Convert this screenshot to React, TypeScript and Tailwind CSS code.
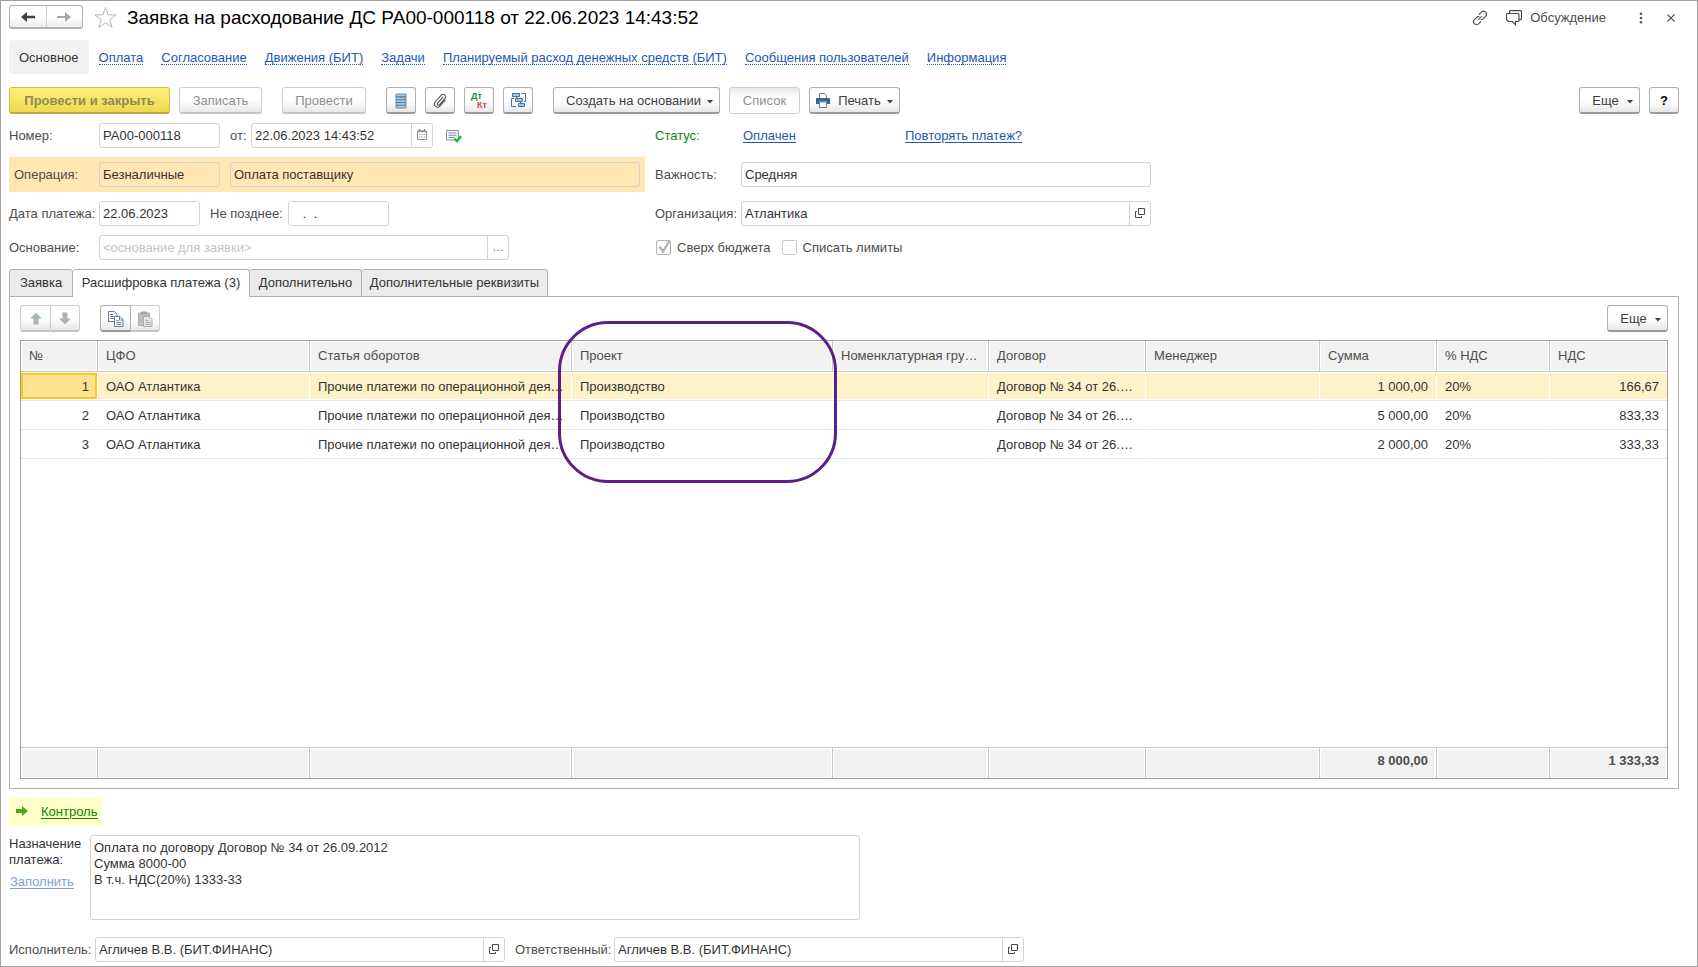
import { useId, useState } from 'react'
import type { ReactNode } from 'react'

type Row = {
  id: number
  cfo: string
  article: string
  project: string
  contract: string
  sum: string
  vatRate: string
  vat: string
}

const rows: Row[] = [
  { id: 1, cfo: 'ОАО Атлантика', article: 'Прочие платежи по операционной дея…', project: 'Производство', contract: 'Договор № 34 от 26.…', sum: '1 000,00', vatRate: '20%', vat: '166,67' },
  { id: 2, cfo: 'ОАО Атлантика', article: 'Прочие платежи по операционной дея…', project: 'Производство', contract: 'Договор № 34 от 26.…', sum: '5 000,00', vatRate: '20%', vat: '833,33' },
  { id: 3, cfo: 'ОАО Атлантика', article: 'Прочие платежи по операционной дея…', project: 'Производство', contract: 'Договор № 34 от 26.…', sum: '2 000,00', vatRate: '20%', vat: '333,33' },
]

const columns = [
  { title: '№', width: 'w-[77px]', total: '' },
  { title: 'ЦФО', width: 'w-[212px]', total: '' },
  { title: 'Статья оборотов', width: 'w-[262px]', total: '' },
  { title: 'Проект', width: 'w-[261px]', total: '' },
  { title: 'Номенклатурная гру…', width: 'w-[156px]', total: '' },
  { title: 'Договор', width: 'w-[157px]', total: '' },
  { title: 'Менеджер', width: 'w-[174px]', total: '' },
  { title: 'Сумма', width: 'w-[117px]', total: '8 000,00' },
  { title: '% НДС', width: 'w-[113px]', total: '' },
  { title: 'НДС', width: 'w-[117px]', total: '1 333,33' },
]

const navLinks = [
  'Оплата',
  'Согласование',
  'Движения (БИТ)',
  'Задачи',
  'Планируемый расход денежных средств (БИТ)',
  'Сообщения пользователей',
  'Информация',
]

const tabs = [
  { title: 'Заявка', width: 'w-[64px]' },
  { title: 'Расшифровка платежа (3)', width: 'w-[177px]' },
  { title: 'Дополнительно', width: 'w-[112px]' },
  { title: 'Дополнительные реквизиты', width: 'w-[186px]' },
]

const buttonBase =
  'flex h-[27px] shrink-0 items-center justify-center whitespace-nowrap rounded-[3px] border border-b-2 bg-linear-to-b from-white from-50% to-[#e8e8e8] pt-px'
const buttonOn = 'border-[#b0b0b0] border-b-[#9a9a9a] text-[#404040]'
const buttonOff = 'border-[#cfcfcf] border-b-[#c4c4c4] text-[#8f8f8f]'

function Caret() {
  return (
    <svg className="mt-[2px] shrink-0" width="6" height="4" viewBox="0 0 6 4" aria-hidden="true">
      <path d="M0 0h6L3 3.5z" fill="#404040" />
    </svg>
  )
}

function MoreButton() {
  return (
    <button type="button" className={`${buttonBase} ${buttonOn} w-[61px] gap-2 pl-[6px]`}>
      Еще
      <Caret />
    </button>
  )
}

function OpenIcon() {
  return (
    <svg width="10" height="10" viewBox="0 0 10 10" fill="none" stroke="#4a4a4a" aria-hidden="true">
      <path d="M3.5 0.5h6v6h-6z" />
      <path d="M2 3.5H0.5v6h6V8" />
    </svg>
  )
}

type FieldProps = {
  label: string
  value: string
  labelClass?: string
  boxClass: string
  placeholder?: string
  button?: ReactNode
  buttonLabel?: string
}

function Field({ label, value, labelClass = '', boxClass, placeholder, button, buttonLabel }: FieldProps) {
  const id = useId()
  return (
    <>
      {labelClass && (
        <label htmlFor={id} className={`shrink-0 whitespace-nowrap text-[#4d4d4d] ${labelClass}`}>
          {label}
        </label>
      )}
      <div className={`flex h-[25px] shrink-0 rounded-[3px] border border-[#d2d2d2] ${boxClass}`}>
        <input
          id={id}
          aria-label={labelClass ? undefined : label}
          defaultValue={value}
          placeholder={placeholder}
          className="min-w-0 flex-1 bg-transparent px-[3px] text-[#333] outline-none placeholder:text-[#c4c4c4]"
        />
        {button && (
          <button type="button" aria-label={buttonLabel} className="flex w-[21px] shrink-0 items-center justify-center border-l border-[#d2d2d2] pb-[2px] text-[#808080]">
            {button}
          </button>
        )}
      </div>
    </>
  )
}

function Check({ label, checked = false }: { label: string; checked?: boolean }) {
  return (
    <label className="relative flex items-center gap-[6px] text-[#4d4d4d]">
      <input
        type="checkbox"
        defaultChecked={checked}
        className="peer size-[15px] appearance-none rounded-[2px] border border-[#c9c9c9] bg-white checked:border-[#b5b5b5]"
      />
      <svg className="pointer-events-none absolute left-[2px] top-0 hidden peer-checked:block" width="13" height="14" viewBox="0 0 13 14" aria-hidden="true">
        <path d="M1.5 6.5 5 11.5 11.5 0.8" fill="none" stroke="#b5b5b5" strokeWidth="2.4" />
      </svg>
      {label}
    </label>
  )
}

export default function App(): React.JSX.Element {
  const [activeTab, setActiveTab] = useState(1)
  const [selectedRow, setSelectedRow] = useState(1)

  const cellClass = (selected: boolean): string =>
    selected
      ? 'h-[29px] truncate border-b border-r border-b-[#e5e5e5] border-r-white bg-[#fff2c8] pl-2 pt-[2px] shadow-[inset_0_1px_#fff,inset_0_-1px_#fff]'
      : 'h-[29px] truncate border-b border-r border-b-[#e5e5e5] border-r-transparent pl-2 pt-[2px]'

  return (
    <main className="min-h-screen border border-[#a0a0a0] bg-white pb-[3px] pl-2 pr-[18px] pt-1 font-['Liberation_Sans',Arial,sans-serif] text-[13px] leading-4 text-[#333]">
      <header className="flex h-6 items-center">
        <div className="flex h-6 w-[74px] rounded-[3px] border border-b-2 border-[#b0b0b0] bg-linear-to-b from-white from-50% to-[#ececec]">
          <button type="button" aria-label="Назад" className="flex flex-1 items-center justify-center border-r border-[#cfcfcf]">
            <svg width="14" height="12" viewBox="0 0 14 12" aria-hidden="true">
              <path d="M0 6 6 1v3.8h8v2.4H6V11z" fill="#404040" />
            </svg>
          </button>
          <button type="button" aria-label="Вперед" className="flex flex-1 items-center justify-center">
            <svg width="14" height="12" viewBox="0 0 14 12" aria-hidden="true">
              <path d="M14 6 8 1v4H0v2h8v4z" fill="#a8a8a8" />
            </svg>
          </button>
        </div>
        <button type="button" aria-label="В избранное" className="ml-[11px]">
          <svg width="23" height="23" viewBox="0 0 23 23" fill="none" stroke="#b4b8bd" aria-hidden="true">
            <path d="M11.5 1.5 14.2 8.7 22 9 15.8 13.7 18.1 21.3 11.5 16.9 4.9 21.3 7.2 13.7 1 9l7.8-.3z" />
          </svg>
        </button>
        <h1 className="ml-[10px] whitespace-nowrap pt-[2px] text-[19px] leading-6 text-black">Заявка на расходование ДС РА00-000118 от 22.06.2023 14:43:52</h1>
        <div className="ml-auto flex items-center pr-1 pt-[2px] text-[#4d4d4d]">
          <button type="button" aria-label="Получить ссылку">
            <svg width="16" height="16" viewBox="0 0 16 16" fill="none" stroke="#555" strokeWidth="1.2" aria-hidden="true">
              <path d="M7 4.5 9.3 2.2a2.9 2.9 0 0 1 4.3 4.2L11.4 8.7a2.9 2.9 0 0 1-2.7.8" />
              <path d="M9 11.5 6.7 13.8a2.9 2.9 0 0 1-4.3-4.2L4.6 7.3a2.9 2.9 0 0 1 2.7-.8" />
              <path d="M6.3 9.7 9.7 6.3" />
            </svg>
          </button>
          <button type="button" className="ml-[18px] flex items-center gap-2">
            <svg width="16" height="16" viewBox="0 0 16 16" fill="none" stroke="#444" strokeWidth="1.1" aria-hidden="true">
              <path d="M1.5 3.5h10.5q1 0 1 1v6q0 1-1 1H9.5v3.2L6.3 11.5H2.500l-2-2v-5q0-1 1-1z" />
              <path d="M3.5 3.5V1.6q0-1 1-1h10q1 0 1 1v7.500L13 10" />
            </svg>
            Обсуждение
          </button>
          <button type="button" aria-label="Меню" className="ml-[33px]">
            <svg width="4" height="12" viewBox="0 0 4 12" fill="#555" aria-hidden="true">
              <circle cx="2" cy="1.7" r="1.3" />
              <circle cx="2" cy="6" r="1.3" />
              <circle cx="2" cy="10.3" r="1.3" />
            </svg>
          </button>
          <button type="button" aria-label="Закрыть" className="ml-6">
            <svg width="8" height="8" viewBox="0 0 8 8" stroke="#555" strokeWidth="1.1" aria-hidden="true">
              <path d="M0.5 0.5l7 7M7.5 0.5l-7 7" />
            </svg>
          </button>
        </div>
      </header>

      <nav className="mt-[11px] flex h-[34px] items-center gap-[18px]">
        <span className="-mr-2 flex h-full items-center rounded-[4px] bg-[#f2f2f2] px-[10px] pt-[2px]">Основное</span>
        {navLinks.map((link) => (
          <a key={link} href="#" className="mt-[2px] whitespace-nowrap border-b border-dotted border-[#2456b8] leading-[13px] text-[#2456b8]">
            {link}
          </a>
        ))}
      </nav>

      <div className="mt-[13px] flex items-center">
        <button
          type="button"
          className="h-[27px] w-[161px] rounded-[3px] border border-b-2 border-[#d0bd48] border-b-[#bda93c] bg-linear-to-b from-[#fff07a] to-[#ecd94f] pt-px font-bold text-[#908a5a]"
        >
          Провести и закрыть
        </button>
        <button type="button" className={`${buttonBase} ${buttonOff} ml-[9px] w-[83px]`}>
          Записать
        </button>
        <button type="button" className={`${buttonBase} ${buttonOff} ml-5 w-[84px]`}>
          Провести
        </button>
        <div className="ml-5 flex gap-[9px]">
          <button type="button" aria-label="Реестр" className={`${buttonBase} ${buttonOn} w-[30px]`}>
            <svg width="12" height="16" viewBox="0 0 12 16" aria-hidden="true">
              <path d="M1 1h10v14H1z" fill="#a9c6dd" stroke="#6f93b0" />
              <path d="M1 3.9h10M1 6.7h10M1 9.5h10M1 12.3h10" stroke="#4f7b9e" strokeWidth="1.1" />
            </svg>
          </button>
          <button type="button" aria-label="Присоединенные файлы" className={`${buttonBase} ${buttonOn} w-[30px]`}>
            <svg width="14" height="15" viewBox="0 0 14 15" fill="none" stroke="#555" strokeWidth="1.1" strokeLinecap="round" aria-hidden="true">
              <path d="M9.8 4.200 4.600 10.200a1.200 1.200 0 0 0 1.800 1.600L12 5.400a2.500 2.500 0 0 0-3.800-3.300L2.100 9a3.200 3.200 0 0 0 4.800 4.200l5.200-6" />
            </svg>
          </button>
          <button type="button" aria-label="Движения документа" className={`${buttonBase} ${buttonOn} w-[30px] text-[9px] font-bold leading-[9px]`}>
            <span className="flex flex-col items-start">
              <span className="text-[#109048]">Дт</span>
              <span className="pl-[6px] text-[#dd4444]">Кт</span>
            </span>
          </button>
          <button type="button" aria-label="Структура подчиненности" className={`${buttonBase} ${buttonOn} w-[30px]`}>
            <svg width="15" height="15" viewBox="0 0 15 15" fill="#a9c6dd" stroke="#3f74a0" aria-hidden="true">
              <path d="M1.500 0.500h7v3h-7zM4.500 5.500h7v3h-7zM7.500 10.500h6v3h-6z" />
              <path d="M10.500 0.500h4v8H13M3 5.500H0.500v8H5M5.500 4v1.500M9.500 9v1.500" fill="none" />
            </svg>
          </button>
        </div>
        <button type="button" className={`${buttonBase} ${buttonOn} ml-5 w-[167px] gap-[6px] pl-[6px]`}>
          Создать на основании
          <Caret />
        </button>
        <button
          type="button"
          className="ml-[9px] h-[27px] w-[71px] rounded-[3px] border border-[#cfcfcf] bg-linear-to-b from-[#e9e9e9] to-white to-40% text-[#8f8f8f]"
        >
          Список
        </button>
        <button type="button" className={`${buttonBase} ${buttonOn} ml-[9px] w-[91px] gap-[6px]`}>
          <svg className="mr-[2px]" width="14" height="15" viewBox="0 0 14 15" aria-hidden="true">
            <path d="M3.500 5V0.500h5l2 2V5" fill="#fff" stroke="#5f7f9d" />
            <path d="M1 5h12q1 0 1 1v5h-3V8.500H3V11H0V6q0-1 1-1z" fill="#3c648c" />
            <path d="M3.500 9h7v5.500h-7z" fill="#fff" stroke="#5f7f9d" />
          </svg>
          Печать
          <Caret />
        </button>
        <div className="ml-auto flex gap-[9px]">
          <MoreButton />
          <button type="button" aria-label="Справка" className={`${buttonBase} ${buttonOn} w-[30px] font-bold text-black`}>
            ?
          </button>
        </div>
      </div>

      <form className="mt-[9px] flex flex-col gap-[9px]" onSubmit={(event) => event.preventDefault()}>
        <div className="flex items-center">
          <div className="flex w-[646px] items-center">
            <Field label="Номер:" value="РА00-000118" labelClass="w-[90px]" boxClass="w-[121px]" />
            <Field
              label="от:"
              value="22.06.2023 14:43:52"
              labelClass="w-[31px] pl-[10px]"
              boxClass="w-[182px]"
              buttonLabel="Выбрать дату"
              button={
                <svg width="10" height="11" viewBox="0 0 10 11" fill="none" stroke="#909090" aria-hidden="true">
                  <path d="M0.500 2h9v8.500h-9z" />
                  <path d="M0.500 2.500h9M2.500 0v2M7.500 0v2" strokeWidth="1.600" />
                  <path d="M2 5.500h6M2 8h6" strokeDasharray="1.200 1.200" />
                </svg>
              }
            />
            <svg className="ml-[13px]" width="16" height="14" viewBox="0 0 16 14" aria-hidden="true">
              <path d="M0.500 1.500h12v9.500h-12z" fill="#f3f6f9" stroke="#8494a6" />
              <path d="M2.500 4h8M2.500 6.300h8M2.500 8.500h6" stroke="#8494a6" />
              <path d="M8.500 9.500l2.500 2.700 4-5" fill="none" stroke="#27b033" strokeWidth="2.400" />
            </svg>
          </div>
          <span className="w-[88px] text-[#0a850a]">Статус:</span>
          <a href="#" className="w-[162px] text-[#2456b8] underline underline-offset-2">
            Оплачен
          </a>
          <a href="#" className="text-[#2456b8] underline underline-offset-2">
            Повторять платеж?
          </a>
        </div>

        <div className="flex items-center">
          <div className="mr-[10px] flex h-[35px] w-[636px] items-center gap-[10px] bg-[#ffe6b3] pl-[5px]">
            <div className="flex items-center">
              <Field label="Операция:" value="Безналичные" labelClass="w-[85px]" boxClass="w-[121px]" />
            </div>
            <Field label="Вид операции" value="Оплата поставщику" boxClass="w-[410px]" />
          </div>
          <Field label="Важность:" value="Средняя" labelClass="w-[86px]" boxClass="w-[410px]" />
        </div>

        <div className="flex items-center">
          <div className="flex w-[646px] items-center">
            <Field label="Дата платежа:" value="22.06.2023" labelClass="w-[90px]" boxClass="w-[101px]" />
            <Field label="Не позднее:" value="   .  ." labelClass="w-[88px] pl-[10px]" boxClass="w-[101px]" />
          </div>
          <Field label="Организация:" value="Атлантика" labelClass="w-[86px]" boxClass="w-[410px]" button={<OpenIcon />} buttonLabel="Открыть организацию" />
        </div>

        <div className="flex items-center">
          <div className="flex w-[646px] items-center">
            <Field
              label="Основание:"
              value=""
              placeholder="<основание для заявки>"
              labelClass="w-[90px]"
              boxClass="w-[410px]"
              button="..."
              buttonLabel="Выбрать основание"
            />
          </div>
          <div className="flex gap-[11px] pl-px">
            <Check label="Сверх бюджета" checked />
            <Check label="Списать лимиты" />
          </div>
        </div>
      </form>

      <div role="tablist" className="mt-[9px] flex h-7">
        {tabs.map((tab, index) => (
          <button
            key={tab.title}
            type="button"
            role="tab"
            aria-selected={index === activeTab}
            onClick={() => setActiveTab(index)}
            className={`relative whitespace-nowrap rounded-t-[3px] border-b border-r border-t border-[#b0b0b0] first:border-l ${tab.width} ${index === activeTab ? 'border-b-white bg-white' : 'bg-[#ebebeb]'}`}
          >
            {tab.title}
          </button>
        ))}
      </div>

      <section className="-mt-px border border-[#b0b0b0] px-[10px] pb-[9px] pt-2">
        <div className="flex h-[27px]">
          <button type="button" aria-label="Переместить вверх" className={`${buttonBase} ${buttonOff} w-[31px] rounded-r-none`}>
            <svg width="12" height="13" viewBox="0 0 12 13" fill="#a9b5bd" aria-hidden="true">
              <path d="M6 0.500 12 6.500H8.500V12.500h-5V6.500H0z" />
            </svg>
          </button>
          <button type="button" aria-label="Переместить вниз" className={`${buttonBase} ${buttonOff} w-[29px] rounded-l-none border-l-0`}>
            <svg width="12" height="13" viewBox="0 0 12 13" fill="#a9b5bd" aria-hidden="true">
              <path d="M6 12.500 12 6.500H8.500V0.500h-5V6.500H0z" />
            </svg>
          </button>
          <button type="button" aria-label="Скопировать строки" className={`${buttonBase} ${buttonOn} ml-5 w-[31px] rounded-r-none`}>
            <svg width="16" height="16" viewBox="0 0 16 16" fill="#fff" stroke="#6a7d92" aria-hidden="true">
              <path d="M0.500 0.500h6l2.500 2.500v7.500h-8.500z" />
              <path d="M2 3.500h3M2 5.500h4M2 7.500h4" />
              <path d="M6.500 5.500h5.500l3 3v7h-8.500z" />
              <path d="M11.500 5.500v3.500h3.500M8.500 9.500h2M8.500 11.500h5M8.500 13.500h5" fill="none" />
            </svg>
          </button>
          <button type="button" aria-label="Вставить строки" className={`${buttonBase} ${buttonOff} w-[29px] rounded-l-none border-l-0`}>
            <svg width="15" height="16" viewBox="0 0 15 16" aria-hidden="true">
              <path d="M0.500 2h11v12.500h-11z" fill="#c3bdb9" stroke="#b3adaa" />
              <path d="M3 0.500h6v3H3z" fill="#a4a4a4" />
              <path d="M5.500 5.500h5.500l3 3v7H5.500z" fill="#e2e5e9" stroke="#a4acb6" />
              <path d="M7.500 9.500h3M7.500 11.500h5M7.500 13.500h5" stroke="#a4acb6" />
            </svg>
          </button>
          <div className="ml-auto">
            <MoreButton />
          </div>
        </div>

        <div className="relative mt-2 border border-[#a0a0a0]">
          <table className="w-full table-fixed border-separate border-spacing-0 text-left">
            <thead>
              <tr>
                {columns.map((column) => (
                  <th
                    key={column.title}
                    scope="col"
                    className={`h-[31px] truncate border-b border-r border-[#c8c8c8] bg-[#f2f2f2] pl-2 font-normal text-[#4d4d4d] shadow-[inset_0_0_0_1px_#fff] last:border-r-0 ${column.width}`}
                  >
                    {column.title}
                  </th>
                ))}
              </tr>
            </thead>
            <tbody>
              {rows.map((row) => {
                const selected = row.id === selectedRow
                const cell = cellClass(selected)
                return (
                  <tr key={row.id} onClick={() => setSelectedRow(row.id)}>
                    <td
                      className={
                        selected
                          ? 'h-[29px] border-b border-r border-b-[#e5e5e5] border-r-white bg-[#ffe48f] px-2 pt-[2px] text-right shadow-[inset_0_1px_#fff,inset_0_-1px_#fff,inset_2px_3px_#f9c824,inset_-2px_-3px_#f9c824]'
                          : `${cell} pr-2 text-right`
                      }
                    >
                      {row.id}
                    </td>
                    <td className={cell}>{row.cfo}</td>
                    <td className={cell}>{row.article}</td>
                    <td className={cell}>{row.project}</td>
                    <td className={cell} />
                    <td className={cell}>{row.contract}</td>
                    <td className={cell} />
                    <td className={`${cell} pr-2 text-right`}>{row.sum}</td>
                    <td className={cell}>{row.vatRate}</td>
                    <td className={`${cell} border-r-0 pr-2 text-right`}>{row.vat}</td>
                  </tr>
                )
              })}
              <tr aria-hidden="true">
                <td colSpan={10} className="h-[288px]" />
              </tr>
            </tbody>
            <tfoot>
              <tr>
                {columns.map((column) => (
                  <td
                    key={column.title}
                    className="h-[31px] border-r border-t border-[#c8c8c8] bg-[#f2f2f2] px-2 pb-1 text-right font-bold text-[#4d4d4d] shadow-[inset_0_0_0_1px_#fff] last:border-r-0"
                  >
                    {column.total}
                  </td>
                ))}
              </tr>
            </tfoot>
          </table>
          {/* callout around the project column */}
          <div className="pointer-events-none absolute -top-5 left-[32.6%] h-[162px] w-[17%] rounded-[50px] border-[3px] border-[#5f1d86]" />
        </div>
      </section>

      <div className="mt-[9px] flex h-7 w-[93px] items-center gap-[13px] bg-[#ffffc8] pl-[7px]">
        <svg className="mb-[2px]" width="12" height="10" viewBox="0 0 12 10" fill="#4ea524" aria-hidden="true">
          <path d="M0 3h6V0l6 5-6 5V7H0z" />
        </svg>
        <a href="#" className="text-[#0a850a] underline underline-offset-2">
          Контроль
        </a>
      </div>

      <div className="mt-[9px] flex">
        <div className="w-[81px]">
          <label htmlFor="purpose" className="block w-[75px] pt-px">
            Назначение платежа:
          </label>
          <a href="#" className="mt-[6px] inline-block pl-px text-[#7d9fdc] underline underline-offset-2">
            Заполнить
          </a>
        </div>
        <textarea
          id="purpose"
          className="h-[85px] w-[770px] resize-none rounded-[3px] border border-[#d2d2d2] px-[3px] py-1 outline-none"
          defaultValue={'Оплата по договору Договор № 34 от 26.09.2012\nСумма 8000-00\nВ т.ч. НДС(20%) 1333-33'}
        />
      </div>

      <div className="mt-[17px] flex items-center">
        <Field label="Исполнитель:" value="Агличев В.В. (БИТ.ФИНАНС)" labelClass="w-[86px]" boxClass="w-[410px]" button={<OpenIcon />} buttonLabel="Открыть исполнителя" />
        <Field
          label="Ответственный:"
          value="Агличев В.В. (БИТ.ФИНАНС)"
          labelClass="w-[109px] pl-[10px]"
          boxClass="w-[410px]"
          button={<OpenIcon />}
          buttonLabel="Открыть ответственного"
        />
      </div>
    </main>
  )
}
